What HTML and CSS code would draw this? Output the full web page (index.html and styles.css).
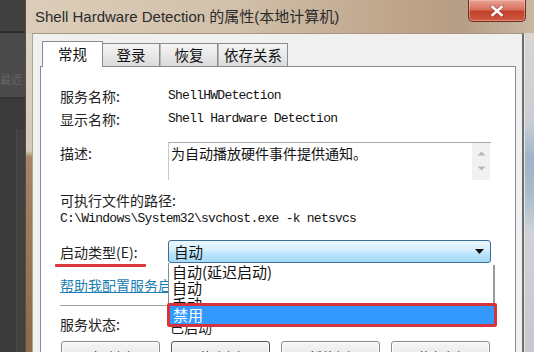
FILE: index.html
```html
<!DOCTYPE html>
<html lang="zh-CN">
<head>
<meta charset="utf-8">
<title>Shell Hardware Detection 的属性</title>
<link rel="stylesheet" href="styles.css">
</head>
<body>
<div class="screen">
  <div class="desk">
    <div class="desk-top"></div>
    <div class="desk-mid"><span class="desk-text">最近</span></div>
    <div class="desk-bot"><div class="desk-col"></div></div>
  </div>
  <div class="window">
    <div class="titlebar">
      <span class="title">Shell Hardware Detection 的属性(本地计算机)</span>
      <div class="close">
        <svg width="16" height="12" viewBox="0 0 16 12">
          <path d="M3 1.5 L13 10.5 M13 1.5 L3 10.5" stroke="#7a2418" stroke-width="4" stroke-linecap="round" opacity="0.35"/>
          <path d="M3.5 2 L12.5 10 M12.5 2 L3.5 10" stroke="#ffffff" stroke-width="2.6" stroke-linecap="square"/>
        </svg>
      </div>
    </div>
    <div class="frame-row">
      <div class="lf"></div>
      <div class="client">
        <div class="tabs">
          <div class="tab active">常规</div>
          <div class="tab t2">登录</div>
          <div class="tab t3">恢复</div>
          <div class="tab t4">依存关系</div>
        </div>
        <div class="panel">
          <div class="row">
            <div class="lbl">服务名称:</div>
            <div class="mono">ShellHWDetection</div>
          </div>
          <div class="row">
            <div class="lbl">显示名称:</div>
            <div class="mono">Shell Hardware Detection</div>
          </div>
          <div class="row row-desc">
            <div class="lbl lbl-desc">描述:</div>
            <div class="desc-box">
              <div class="desc-text">为自动播放硬件事件提供通知。</div>
              <div class="desc-scroll">
                <svg width="9" height="5" viewBox="0 0 9 5"><path d="M0.5 4.5 L4.5 0.5 L8.5 4.5 Z" fill="#b8b8b8"/></svg>
                <svg width="9" height="5" viewBox="0 0 9 5"><path d="M0.5 0.5 L4.5 4.5 L8.5 0.5 Z" fill="#b8b8b8"/></svg>
              </div>
            </div>
          </div>
          <div class="exe-label">可执行文件的路径:</div>
          <div class="mono path">C:\Windows\System32\svchost.exe -k netsvcs</div>
          <div class="row row-start">
            <div class="lbl lbl-start">启动类型(E):</div>
            <div class="combo">
              <span class="combo-text">自动</span>
              <svg class="combo-arrow" width="9" height="5" viewBox="0 0 9 5"><path d="M0 0 L9 0 L4.5 5 Z" fill="#111"/></svg>
              <div class="list">
                <div class="item">自动(延迟启动)</div>
                <div class="item">自动</div>
                <div class="item">手动</div>
                <div class="item selected">禁用</div>
              </div>
            </div>
          </div>
          <div class="row row-link">
            <span class="link">帮助我配置服务启动选项。</span>
          </div>
          <div class="sep"></div>
          <div class="row row-status">
            <div class="lbl">服务状态:</div>
            <div class="status">已启动</div>
          </div>
          <div class="buttons">
            <div class="btn">启动(S)</div>
            <div class="btn focus">停止(T)</div>
            <div class="btn">暂停(P)</div>
            <div class="btn">恢复(R)</div>
          </div>
        </div>
      </div>
      <div class="rf"></div>
    </div>
  </div>
</div>
</body>
</html>
```

FILE: styles.css
```css
* { box-sizing: border-box; }
html, body { margin: 0; padding: 0; }
body {
  width: 534px;
  height: 352px;
  overflow: hidden;
  background: #3c3c3c;
  font-family: "Noto Sans CJK SC", "Noto Sans", sans-serif;
  color: #1a1a1a;
}
.screen {
  display: flex;
  width: 534px;
  height: 352px;
  overflow: hidden;
}

/* desktop strip on the left */
.desk {
  width: 25px;
  flex: none;
  display: flex;
  flex-direction: column;
}
.desk-top { height: 33px; background: #404040; border-bottom: 2px solid #2e2e2e; }
.desk-mid {
  height: 66px;
  background: #4a4a4a;
  border-bottom: 2px solid #333;
  display: flex;
  align-items: flex-end;
  padding-bottom: 12px;
}
.desk-text { font-size: 11px; color: #666; line-height: 12px; white-space: nowrap; }
.desk-bot { flex: 1; background: #3a3a3a; display: flex; justify-content: flex-end; padding-top: 30px; }
.desk-col { width: 9px; background: #414141; border-left: 1px solid #4a4a4a; }

/* window */
.window {
  flex: 1;
  display: flex;
  flex-direction: column;
  border-left: 1px solid #5b4c3c;
  background: #cbb9a3;
}
.titlebar {
  height: 33px;
  flex: none;
  display: flex;
  align-items: flex-start;
  justify-content: space-between;
  background: linear-gradient(to right, #dbcdb9 0%, #d2c1ab 40%, #c0a78d 70%, #b59c83 85%, #c9b7a2 100%);
}
.title {
  margin-left: 9px;
  margin-top: 7px;
  font-family: "Liberation Sans", "Noto Sans CJK SC", sans-serif;
  font-size: 15px;
  line-height: 20px;
  color: #2b2b2b;
  white-space: nowrap;
}
.close {
  width: 58px;
  height: 22px;
  margin-right: 8px;
  border: 1px solid #6e3024;
  border-top: none;
  border-radius: 0 0 5px 5px;
  background: linear-gradient(to bottom, #e9a595 0%, #d7705c 45%, #c2402b 55%, #cf5a40 100%);
  box-shadow: inset 0 0 0 1px rgba(255, 200, 190, 0.45);
  display: flex;
  align-items: center;
  justify-content: center;
}
.frame-row {
  flex: 1;
  display: flex;
}
.lf {
  width: 6px;
  flex: none;
  background: linear-gradient(to bottom, #ddd3c6 0, #d6cab9 118px, #a58565 124px, #8b6847 100%);
}
.rf {
  width: 10px;
  flex: none;
  background: linear-gradient(to bottom, #d9d6d2 0, #c9ced4 90px, #9fb4c9 125px, #a9bccd 160px, #cfd3d7 200px, #c4c8cc 100%);
  border-left: 1px solid #e6e6e6;
}
.client {
  flex: 1;
  display: flex;
  flex-direction: column;
  background: #f0f0f0;
  border-top: 1px solid #a7967f;
  border-left: 1px solid #b3a48f;
  border-right: 2px solid #6d6d6d;
  padding: 7px 6px 0 7px;
}

/* tabs */
.tabs {
  height: 25px;
  flex: none;
  display: flex;
  align-items: flex-end;
  position: relative;
  z-index: 2;
}
.tab {
  height: 23px;
  border: 1px solid #898c95;
  border-bottom: none;
  background: linear-gradient(to bottom, #f4f4f4 0%, #e9e9e9 50%, #dadada 100%);
  font-size: 14.5px;
  line-height: 22px;
  text-align: center;
  color: #111;
}
.tab.active {
  height: 26px;
  margin-left: 2px;
  margin-bottom: -1px;
  width: 61px;
  background: #ffffff;
  line-height: 24px;
}
.t2 { width: 57px; border-left: none; }
.t3 { width: 58px; border-left: 1px solid #b5b7bd; }
.t4 { width: 70px; border-left: 1px solid #b5b7bd; }

/* panel */
.panel {
  flex: 1;
  background: #ffffff;
  border: 1px solid #898c95;
  border-bottom: none;
  padding: 17px 22px 0 19px;
  display: flex;
  flex-direction: column;
  font-size: 14px;
}
.row {
  display: flex;
  align-items: center;
  height: 23px;
  flex: none;
}
.lbl {
  width: 108px;
  flex: none;
  white-space: nowrap;
  color: #222;
}
.mono {
  font-family: "Liberation Mono", monospace;
  font-size: 13px;
  letter-spacing: -0.75px;
  color: #111;
  white-space: nowrap;
}
.row-desc {
  margin-top: 12px;
  height: 38px;
  align-items: flex-start;
}
.lbl-desc { line-height: 22px; }
.desc-box {
  width: 323px;
  height: 38px;
  display: flex;
  border-top: 1px solid #a9abb2;
  border-left: 1px solid #c9c9c9;
}
.desc-text {
  flex: 1;
  padding: 2px 2px 0 2px;
  line-height: 17px;
  font-size: 14px;
  color: #111;
}
.desc-scroll {
  width: 18px;
  margin-right: 1px;
  background: #f1f1f1;
  display: flex;
  flex-direction: column;
  align-items: center;
  justify-content: space-between;
  padding: 8px 0 9px;
}
.exe-label {
  margin-top: 10px;
  height: 20px;
  line-height: 20px;
  flex: none;
  color: #222;
}
.path {
  height: 18px;
  line-height: 18px;
  flex: none;
}
.row-start { margin-top: 12px; }
.lbl-start { position: relative; }
.lbl-start::after {
  content: "";
  position: absolute;
  left: -5px;
  bottom: -5px;
  width: 91px;
  height: 3px;
  background: #d9363e;
  border-radius: 1px;
}
.combo {
  position: relative;
  width: 323px;
  height: 23px;
  border: 1px solid #3c6f96;
  border-radius: 3px;
  background: linear-gradient(to bottom, #eaf6fd 0%, #d7effc 45%, #bde6fd 55%, #a6d9f4 100%);
  display: flex;
  align-items: center;
  justify-content: space-between;
  padding: 0 5px 0 5px;
  z-index: 3;
}
.combo-text { font-size: 14.5px; color: #111; }
.combo-arrow { margin-right: 1px; }
.list {
  position: absolute;
  left: -1px;
  top: 22px;
  width: 325px;
  height: 62px;
  background: #ffffff;
  border-left: 1px solid #8a8a8a;
  box-shadow: 2px 2px 0 #9a9a9a;
  display: flex;
  flex-direction: column;
  padding-top: 1px;
}
.item {
  height: 16px;
  line-height: 16px;
  font-size: 15px;
  padding-left: 3px;
  color: #111;
  white-space: nowrap;
  flex: none;
}
.item.selected {
  position: relative;
  margin-top: -9px;
  margin-left: -2px;
  margin-right: -4px;
  height: 24px;
  line-height: 18px;
  border: 3px solid #d6333d;
  border-radius: 2px;
  background: #3399ff;
  color: #ffffff;
  padding-left: 3px;
}
.row-link { margin-top: 12px; height: 20px; }
.link {
  color: #1d7fb2;
  text-decoration: underline;
  white-space: nowrap;
}
.sep {
  margin-top: 10px;
  height: 1px;
  flex: none;
  background: #a0a0a0;
}
.row-status { margin-top: 8px; height: 20px; }
.status { padding-left: 2px; padding-top: 6px; }
.buttons {
  margin-top: 7px;
  display: flex;
  gap: 11px;
  margin-left: 1px;
}
.btn {
  width: 99px;
  height: 24px;
  border: 1px solid #8a8a8a;
  border-radius: 3px;
  background: linear-gradient(to bottom, #f6f6f6 0%, #ebebeb 50%, #dddddd 100%);
  box-shadow: inset 0 0 0 1px #fcfcfc;
  font-size: 13px;
  line-height: 30px;
  text-align: center;
  color: #222;
}
.btn.focus { border-color: #555; }
```
